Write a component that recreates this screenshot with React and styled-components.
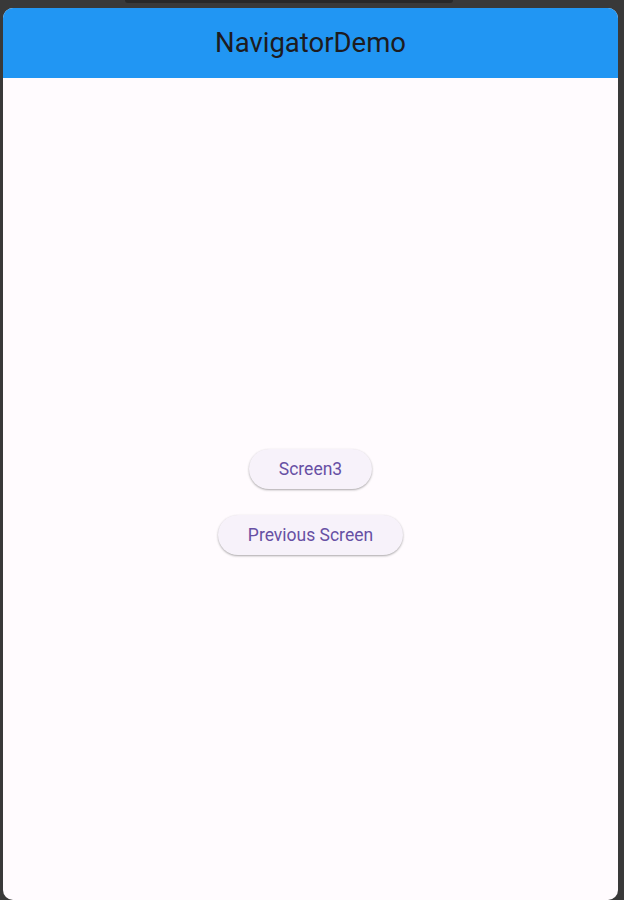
import React from "react";
import styled, { createGlobalStyle } from "styled-components";

const Global = createGlobalStyle`
  html, body { margin: 0; padding: 0; height: 100%; }
  body { background: #393939; font-family: Roboto, "Noto Sans", sans-serif; overflow: hidden; }
  #root { height: 900px; }
`;

const Screen = styled.div`
  display: flex;
  flex-direction: column;
  height: 900px;
  padding: 0 6px 0 3px;
  box-sizing: border-box;
`;

const Bezel = styled.div`
  height: 8px;
  flex: none;
  display: flex;
`;

const Notch = styled.div`
  margin-left: 122px;
  width: 328px;
  height: 3px;
  background: #282828;
  border-radius: 0 0 6px 6px;
`;

const Window = styled.div`
  flex: 1;
  display: flex;
  flex-direction: column;
  background: #fffbfe;
  border-radius: 10px;
  overflow: hidden;
`;

const AppBar = styled.header`
  height: 70px;
  flex: none;
  background: #2196f3;
  display: flex;
  align-items: center;
  justify-content: center;
  padding-bottom: 2px;
  box-sizing: border-box;
`;

const Title = styled.h1`
  margin: 0;
  font-family: Roboto, sans-serif;
  font-weight: 400;
  font-size: 27.5px;
  color: #1d1b20;
  letter-spacing: 0;
`;

const Body = styled.main`
  flex: 1;
  display: flex;
  flex-direction: column;
  align-items: center;
  justify-content: center;
  gap: 26px;
  padding-top: 26px;
`;

const Button = styled.button`
  height: 40px;
  padding: 0 30px;
  border: none;
  border-radius: 20px;
  background: #f7f2fa;
  color: #6750a4;
  font-family: Roboto, sans-serif;
  font-size: 17.5px;
  font-weight: 400;
  box-shadow: 0 1px 2px rgba(0, 0, 0, 0.25), 0 1px 3px rgba(0, 0, 0, 0.1);
  cursor: pointer;
`;

export default function App() {
  return (
    <>
      <Global />
      <Screen>
        <Bezel>
          <Notch />
        </Bezel>
        <Window>
          <AppBar>
            <Title>NavigatorDemo</Title>
          </AppBar>
          <Body>
            <Button>Screen3</Button>
            <Button>Previous Screen</Button>
          </Body>
        </Window>
      </Screen>
    </>
  );
}
